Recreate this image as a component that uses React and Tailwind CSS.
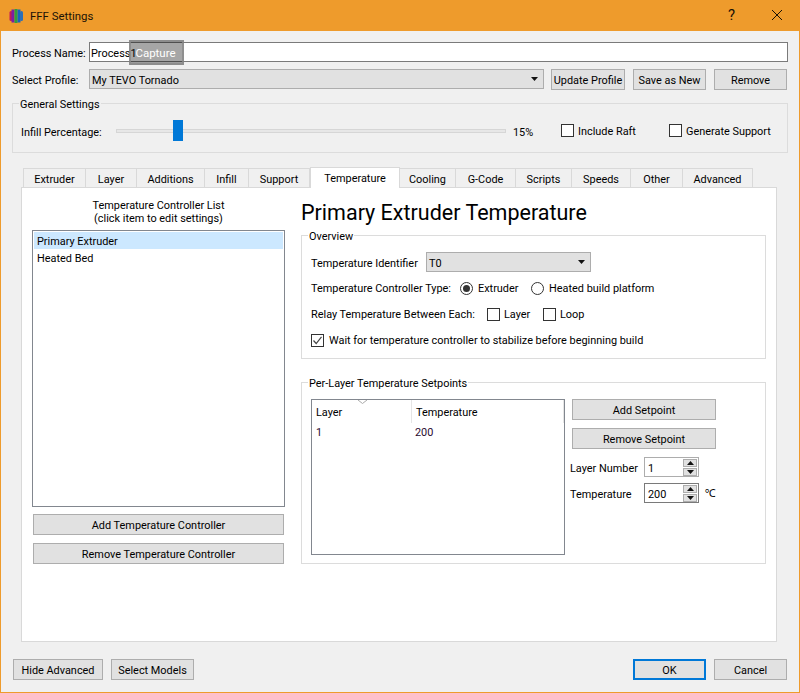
import React from "react";

const Btn = ({ className = "", edge = "border border-[#adadad]", children }) => (
  <button className={"flex items-center justify-center bg-[#e1e1e1] h-[21px] pt-[2px] shrink-0 " + edge + " " + className}>{children}</button>
);

const Arrow = () => (
  <svg width="7" height="4" viewBox="0 0 7 4"><path d="M0 0h7L3.5 4z" fill="#111" /></svg>
);

const Select = ({ className = "", value }) => (
  <div className={"flex items-center justify-between bg-[#e1e1e1] border border-[#adadad] h-5 pl-[2px] pr-[5px] shrink-0 " + className}>
    <span className="pt-[4px]">{value}</span>
    <Arrow />
  </div>
);

const Check = ({ checked }) => (
  <span className="inline-flex items-center justify-center w-[13px] h-[13px] border border-[#333] bg-white shrink-0">
    {checked && (
      <svg width="11" height="11" viewBox="0 0 11 11"><path d="M1.5 5.5 4.2 8.5 9.5 1.8" fill="none" stroke="#444" strokeWidth="1.2" /></svg>
    )}
  </span>
);

const Radio = ({ checked }) => (
  <span className="inline-flex items-center justify-center w-[13px] h-[13px] rounded-full border border-[#333] bg-white shrink-0">
    {checked && <span className="w-[7px] h-[7px] rounded-full bg-[#333]" />}
  </span>
);

const Group = ({ title, className = "", children }) => (
  <div className={"relative border border-[#dcdcdc] " + className}>
    <span className="absolute left-[6px] top-[-6px] h-[14px] leading-[14px] px-px bg-[var(--g)] whitespace-nowrap">{title}</span>
    {children}
  </div>
);

const tabs = [
  ["Extruder", "w-[63px]"],
  ["Layer", "w-[51px]"],
  ["Additions", "w-[68px]"],
  ["Infill", "w-[44px]"],
  ["Support", "w-[61px]"],
  ["Temperature", "w-[90px]"],
  ["Cooling", "w-[56px]"],
  ["G-Code", "w-[60px]"],
  ["Scripts", "w-[56px]"],
  ["Speeds", "w-[59px]"],
  ["Other", "w-[52px]"],
  ["Advanced", "w-[70px]"],
];

const Spin = ({ value, className = "" }) => (
  <div className={"flex items-center justify-between w-[55px] h-5 bg-white border pl-[3px] pr-[1px] " + className}>
    <span className="pt-[3px]">{value}</span>
    <div className="flex flex-col gap-px">
      <span className="flex items-center justify-center w-[14px] h-[8px] bg-[#e1e1e1] border border-[#adadad]">
        <svg width="7" height="4" viewBox="0 0 7 4"><path d="M3.5 0 7 4H0z" fill="#111" /></svg>
      </span>
      <span className="flex items-center justify-center w-[14px] h-[8px] bg-[#e1e1e1] border border-[#adadad]">
        <svg width="7" height="4" viewBox="0 0 7 4"><path d="M0 0h7L3.5 4z" fill="#111" /></svg>
      </span>
    </div>
  </div>
);

export default function App() {
  return (
    <div className="relative w-[800px] h-[693px] flex flex-col bg-[#f0f0f0] border-x border-b border-[#ee9b2c] text-[10.9px] leading-[14px] text-black whitespace-nowrap font-['Roboto','Noto_Sans',sans-serif] overflow-hidden">
      {/* Title bar */}
      <div className="flex items-center h-[31px] bg-[#ee9b2c] shrink-0 -mx-px">
        <svg width="16" height="16" viewBox="0 0 16 16" className="ml-[8px]">
          <rect x="1.5" y="3" width="3" height="10" rx="1.5" fill="#c2185b" />
          <rect x="3.5" y="1.5" width="3" height="13" fill="#7b1fa2" />
          <rect x="6.5" y="1" width="3" height="14" fill="#2e9e3e" />
          <rect x="9.5" y="1.5" width="3" height="13" fill="#1565c0" />
          <rect x="12" y="3" width="3" height="10" rx="1.5" fill="#2a6fb8" />
        </svg>
        <span className="ml-[6px] text-[11.4px] text-[#1a1206]">FFF Settings</span>
        <span className="ml-auto text-[15px] text-[#1a1206] -translate-y-px">?</span>
        <svg width="12" height="12" viewBox="0 0 12 12" className="ml-[36px] mr-[17px] -translate-y-px">
          <path d="M1 1l10 10M11 1 1 11" stroke="#1a1206" strokeWidth="1" fill="none" />
        </svg>
      </div>

      {/* Process name */}
      <div className="flex items-center mt-[11px] ml-[11px]">
        <span className="w-[77px] shrink-0 pt-[4px]">Process Name:</span>
        <div className="flex items-center w-[699px] h-5 bg-white border border-[#7a7a7a] pl-px pt-[4px]">Process1</div>
      </div>

      {/* Profile */}
      <div className="flex items-start mt-[7px] ml-[11px]">
        <span className="w-[77px] h-5 flex items-center shrink-0 pt-[4px]">Select Profile:</span>
        <Select value="My TEVO Tornado" className="w-[455px]" />
        <Btn className="w-[74px] ml-[7px]">Update Profile</Btn>
        <Btn className="w-[73px] ml-[8px]">Save as New</Btn>
        <Btn className="w-[73px] ml-[8px]">Remove</Btn>
      </div>

      {/* General */}
      <div className="[--g:#f0f0f0] mt-[13px] ml-[11px]">
        <Group title="General Settings" className="w-[776px] h-[50px]">
          <div className="flex items-center h-full pl-[8px] pt-[5px]">
            <span className="w-[95px] shrink-0 pt-[4px]">Infill Percentage:</span>
            <div className="relative w-[390px] h-[4px] bg-[#e7e7e7] border border-[#d6d6d6] shrink-0">
              <span className="absolute left-[56px] top-[-10px] w-[10px] h-[21px] bg-[#0078d7]" />
            </div>
            <span className="ml-[7px] w-[48px] shrink-0 pt-[4px]">15%</span>
            <Check />
            <span className="ml-[4px] w-[91px] shrink-0 pt-[2px]">Include Raft</span>
            <Check />
            <span className="ml-[4px] pt-[2px]">Generate Support</span>
          </div>
        </Group>
      </div>

      {/* Tabs */}
      <div className="flex items-end h-[21px] mt-[13px] ml-[22px] relative z-10 shrink-0">
        {tabs.map(([t, w]) =>
          t === "Temperature" ? (
            <div key={t} className={"flex items-center justify-center h-[21px] -mb-px bg-white border border-b-0 border-[#d9d9d9] pt-[2px] " + w}>{t}</div>
          ) : (
            <div key={t} className={"flex items-center justify-center h-[19px] bg-[#f0f0f0] border border-l-0 first:border-l border-b-0 border-[#d9d9d9] pt-[4px] " + w}>{t}</div>
          )
        )}
      </div>

      {/* Pane */}
      <div className="[--g:#ffffff] flex w-[756px] h-[455px] ml-[20px] bg-white border border-[#d9d9d9] pl-[10px] pt-[11px] shrink-0">
        <div className="w-[253px] shrink-0 flex flex-col">
          <div className="text-center h-[26px] leading-[13px]">
            Temperature Controller List
            <br />
            (click item to edit settings)
          </div>
          <div className="mt-[5px] h-[277px] border border-[#82878f] p-px">
            <div className="flex items-center h-[17px] bg-[#cce8ff] pl-[3px] pt-[2px]">Primary Extruder</div>
            <div className="flex items-center h-[17px] pl-[3px] pt-[2px]">Heated Bed</div>
          </div>
          <Btn className="mt-[7px] ml-px w-[251px]">Add Temperature Controller</Btn>
          <Btn className="mt-[8px] ml-px w-[251px]">Remove Temperature Controller</Btn>
        </div>

        <div className="ml-[16px] w-[465px] shrink-0 flex flex-col">
          <h1 className="h-[26px] leading-[26px] pt-px text-[21.5px] text-[#000]">Primary Extruder Temperature</h1>

          <Group title="Overview" className="mt-[10px] h-[124px] pl-[9px] pt-[16px]">
            <div className="flex items-center h-5">
              <span className="w-[115px] shrink-0 pt-[4px]">Temperature Identifier</span>
              <Select value="T0" className="w-[165px]" />
            </div>
            <div className="flex items-center h-5 mt-[6px]">
              <span className="w-[149px] shrink-0 pt-[2px]">Temperature Controller Type:</span>
              <Radio checked />
              <span className="ml-[5px] w-[53px] pt-[2px]">Extruder</span>
              <Radio />
              <span className="ml-[5px] pt-[2px]">Heated build platform</span>
            </div>
            <div className="flex items-center h-5 mt-[6px]">
              <span className="w-[176px] shrink-0 pt-[2px]">Relay Temperature Between Each:</span>
              <Check />
              <span className="ml-[4px] w-[39px] pt-[2px]">Layer</span>
              <Check />
              <span className="ml-[4px] pt-[2px]">Loop</span>
            </div>
            <div className="flex items-center h-5 mt-[6px]">
              <Check checked />
              <span className="ml-[5px] pt-[2px]">Wait for temperature controller to stabilize before beginning build</span>
            </div>
          </Group>

          <Group title="Per-Layer Temperature Setpoints" className="mt-[23px] h-[182px] pl-[9px] pt-[16px] flex items-start">
            <div className="relative w-[254px] h-[156px] border border-[#82878f] shrink-0">
              <svg width="9" height="4" viewBox="0 0 9 4" className="absolute left-[46px] top-0">
                <path d="M0 0l4.5 3.5L9 0" fill="none" stroke="#aaa" />
              </svg>
              <div className="flex h-[23px]">
                <div className="flex items-center w-[100px] pl-[4px] pt-[3px] border-r border-[#e5e5e5] h-[23px]">Layer</div>
                <div className="flex items-center pl-[4px] pt-[3px] grow border-r border-[#e5e5e5] h-[23px]">Temperature</div>
              </div>
              <div className="flex items-center h-[17px] pt-[2px] text-[#2a0a30]">
                <span className="w-[103px] pl-[4px]">1</span>
                <span>200</span>
              </div>
            </div>
            <div className="ml-[7px] flex flex-col">
              <Btn className="w-[144px]">Add Setpoint</Btn>
              <Btn className="w-[144px] mt-[8px]">Remove Setpoint</Btn>
              <div className="flex items-center -ml-[2px] mt-[8px]">
                <span className="w-[74px] shrink-0 pt-[4px]">Layer Number</span>
                <Spin value="1" className="border-[#adadad]" />
              </div>
              <div className="flex items-center -ml-[2px] mt-[6px]">
                <span className="w-[74px] shrink-0 pt-[4px]">Temperature</span>
                <Spin value="200" className="border-[#7a7a7a]" />
                <span className="ml-[6px] pt-[2px]">℃</span>
              </div>
            </div>
          </Group>
        </div>
      </div>

      {/* Footer */}
      <div className="flex items-center mt-[17px] ml-[12px]">
        <Btn className="w-[90px]">Hide Advanced</Btn>
        <Btn className="w-[83px] ml-[8px]">Select Models</Btn>
        <Btn edge="border-2 border-[#0078d7]" className="w-[73px] ml-[439px]">OK</Btn>
        <Btn className="w-[73px] ml-[8px]">Cancel</Btn>
      </div>

      {/* Capture overlay */}
      <div className="absolute left-[128px] top-[40px] flex items-center justify-center w-[55px] h-[25px] bg-black/35 border-2 border-[#8a8a8a]/80 pr-[2px] text-white text-[11.5px]">Capture</div>
    </div>
  );
}
